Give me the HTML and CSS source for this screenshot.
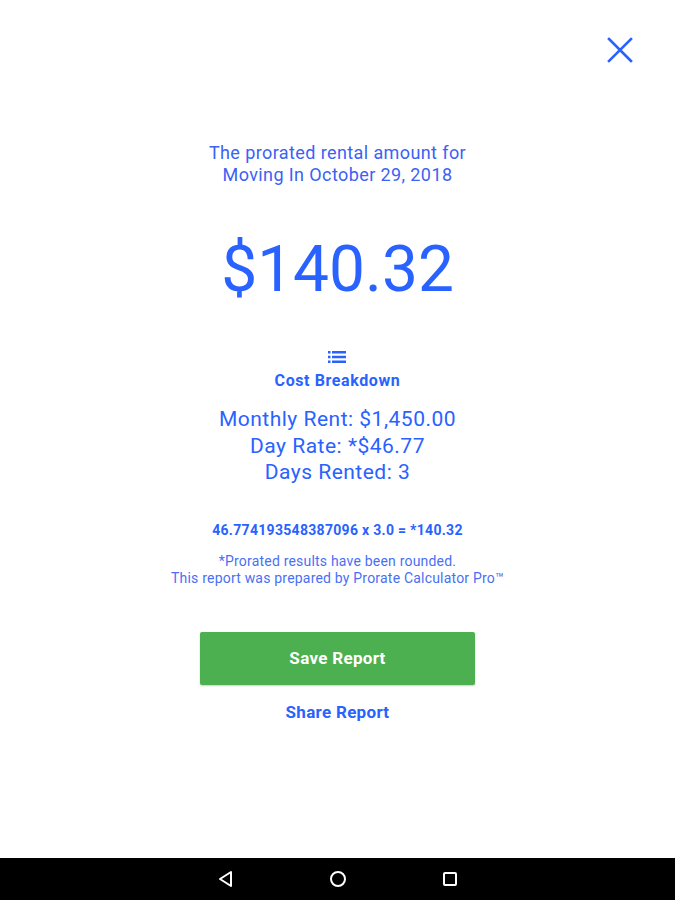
FILE: index.html
```html
<!DOCTYPE html>
<html lang="en">
<head>
    <meta charset="UTF-8">
    <meta name="viewport" content="width=device-width, initial-scale=1.0">
    <title>Prorate Report</title>
    <link rel="stylesheet" href="styles.css">
</head>
<body>
    <div class="screen">
        <div class="top-bar">
            <button class="close-btn" aria-label="Close">
                <svg width="26" height="26" viewBox="0 0 26 26">
                    <path d="M2 2 L24 24 M24 2 L2 24" stroke="#2962ff" stroke-width="2.6" stroke-linecap="square" fill="none"/>
                </svg>
            </button>
        </div>

        <div class="report">
            <p class="intro">The prorated rental amount for<br>Moving In October 29, 2018</p>

            <div class="amount">$140.32</div>

            <div class="breakdown-head">
                <svg width="18" height="12" viewBox="0 0 18 12">
                    <rect x="0" y="0" width="2.5" height="2.5" fill="#2962ff"/>
                    <rect x="4" y="0" width="14" height="2.5" fill="#2962ff"/>
                    <rect x="0" y="4.75" width="2.5" height="2.5" fill="#2962ff"/>
                    <rect x="4" y="4.75" width="14" height="2.5" fill="#2962ff"/>
                    <rect x="0" y="9.5" width="2.5" height="2.5" fill="#2962ff"/>
                    <rect x="4" y="9.5" width="14" height="2.5" fill="#2962ff"/>
                </svg>
                <span>Cost Breakdown</span>
            </div>

            <div class="details">
                <div>Monthly Rent: $1,450.00</div>
                <div>Day Rate: *$46.77</div>
                <div>Days Rented: 3</div>
            </div>

            <div class="formula">46.774193548387096 x 3.0 = *140.32</div>

            <p class="note">*Prorated results have been rounded.<br>This report was prepared by Prorate Calculator Pro&trade;</p>

            <button class="save-btn">Save Report</button>
            <button class="share-btn">Share Report</button>
        </div>
    </div>

    <div class="nav-bar">
        <svg width="20" height="20" viewBox="0 0 20 20">
            <path d="M15 3 L15 17 L4 10 Z" stroke="#fff" stroke-width="2" fill="none" stroke-linejoin="round"/>
        </svg>
        <svg width="20" height="20" viewBox="0 0 20 20">
            <circle cx="10" cy="10" r="7" stroke="#fff" stroke-width="2" fill="none"/>
        </svg>
        <svg width="20" height="20" viewBox="0 0 20 20">
            <rect x="4" y="4" width="12" height="12" rx="1" stroke="#fff" stroke-width="2" fill="none"/>
        </svg>
    </div>
</body>
</html>
```

FILE: styles.css
```css
body {
    margin: 0;
    font-family: Roboto, "Liberation Sans", sans-serif;
    background: white;
    color: #2962ff;
}

.screen {
    height: 858px;
    display: flex;
    flex-direction: column;
}

.top-bar {
    display: flex;
    justify-content: flex-end;
    padding: 37px 42px 0 0;
}

.close-btn {
    background: none;
    border: none;
    padding: 0;
    width: 26px;
    height: 26px;
    cursor: pointer;
}

.close-btn svg {
    display: block;
}

.report {
    display: flex;
    flex-direction: column;
    align-items: center;
    text-align: center;
}

.intro {
    margin: 79px 0 0;
    font-size: 18px;
    line-height: 22px;
    letter-spacing: 0.4px;
    color: #3b62f5;
}

.amount {
    margin-top: 46px;
    font-size: 64px;
    line-height: 76px;
}

.breakdown-head {
    margin-top: 43px;
    display: flex;
    flex-direction: column;
    align-items: center;
    gap: 8px;
    font-size: 16px;
    font-weight: bold;
    letter-spacing: 0.6px;
}

.breakdown-head svg {
    display: block;
}

.details {
    margin-top: 16px;
    font-size: 21px;
    line-height: 26.5px;
    letter-spacing: 0.5px;
}

.formula {
    margin-top: 36px;
    font-size: 14px;
    font-weight: bold;
    letter-spacing: 0.3px;
}

.note {
    margin: 15px 0 0;
    font-size: 14px;
    line-height: 17px;
    letter-spacing: 0.2px;
    color: #4a6ff5;
}

.save-btn {
    margin-top: 45px;
    width: 275px;
    height: 53px;
    background: #4caf50;
    color: white;
    border: none;
    border-radius: 2px;
    font-family: inherit;
    font-size: 17px;
    font-weight: bold;
    letter-spacing: 0.3px;
    box-shadow: 0 1px 2px rgba(0,0,0,0.2);
    cursor: pointer;
}

.share-btn {
    margin-top: 16px;
    background: none;
    border: none;
    color: #2962ff;
    font-family: inherit;
    font-size: 17px;
    font-weight: bold;
    letter-spacing: 0.3px;
    cursor: pointer;
}

.nav-bar {
    height: 42px;
    background: black;
    display: flex;
    justify-content: center;
    align-items: center;
    gap: 92px;
}

.nav-bar svg {
    display: block;
}
```
